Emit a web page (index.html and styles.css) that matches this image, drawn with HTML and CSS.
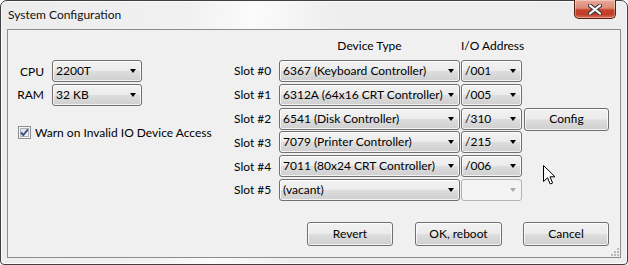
FILE: index.html
```html
<!DOCTYPE html>
<html>
<head>
<meta charset="utf-8">
<link rel="stylesheet" href="styles.css">
</head>
<body>
<div class="window">
  <div class="titlebar">
    <span class="title">System Configuration</span>
    <div class="close">
      <svg width="14" height="11" viewBox="0 0 14 11">
        <path d="M2 1.5 L12 9.5 M12 1.5 L2 9.5" stroke="#3a3a3a" stroke-width="4.2" stroke-linecap="round"/>
        <path d="M2 1.5 L12 9.5 M12 1.5 L2 9.5" stroke="#ffffff" stroke-width="2.2" stroke-linecap="round"/>
      </svg>
    </div>
  </div>
  <div class="client">
    <div class="main">
      <div class="left">
        <div class="field">
          <span class="lbl">CPU</span>
          <div class="combo cpu"><span class="val">2200T</span><i class="arrow"></i></div>
        </div>
        <div class="field">
          <span class="lbl">RAM</span>
          <div class="combo cpu"><span class="val">32 KB</span><i class="arrow"></i></div>
        </div>
        <label class="check">
          <svg class="box" width="13" height="13" viewBox="0 0 13 13">
            <defs>
              <linearGradient id="cb" x1="0" y1="0" x2="1" y2="1">
                <stop offset="0" stop-color="#dcdcdc"/>
                <stop offset="1" stop-color="#fbfbfb"/>
              </linearGradient>
            </defs>
            <rect x="0.5" y="0.5" width="12" height="12" fill="#f4f4f4" stroke="#8e8f8f"/>
            <rect x="2.5" y="2.5" width="8" height="8" fill="url(#cb)" stroke="#aeb2b6"/>
            <path d="M3 6.5 L5.3 9 L10 3.3" fill="none" stroke="#3d5088" stroke-width="1.9"/>
          </svg>
          <span>Warn on Invalid IO Device Access</span>
        </label>
      </div>
      <div class="slots">
        <span></span>
        <span class="head">Device Type</span>
        <span class="head">I/O Address</span>
        <span></span>

        <span class="slot">Slot #0</span>
        <div class="combo"><span class="val">6367 (Keyboard Controller)</span><i class="arrow"></i></div>
        <div class="combo"><span class="val">/001</span><i class="arrow"></i></div>
        <span></span>

        <span class="slot">Slot #1</span>
        <div class="combo"><span class="val">6312A (64x16 CRT Controller)</span><i class="arrow"></i></div>
        <div class="combo"><span class="val">/005</span><i class="arrow"></i></div>
        <span></span>

        <span class="slot">Slot #2</span>
        <div class="combo"><span class="val">6541 (Disk Controller)</span><i class="arrow"></i></div>
        <div class="combo"><span class="val">/310</span><i class="arrow"></i></div>
        <div class="btn config">Config</div>

        <span class="slot">Slot #3</span>
        <div class="combo"><span class="val">7079 (Printer Controller)</span><i class="arrow"></i></div>
        <div class="combo"><span class="val">/215</span><i class="arrow"></i></div>
        <span></span>

        <span class="slot">Slot #4</span>
        <div class="combo"><span class="val">7011 (80x24 CRT Controller)</span><i class="arrow"></i></div>
        <div class="combo"><span class="val">/006</span><i class="arrow"></i></div>
        <span></span>

        <span class="slot">Slot #5</span>
        <div class="combo"><span class="val">(vacant)</span><i class="arrow"></i></div>
        <div class="combo disabled"><span class="val"></span><i class="arrow"></i></div>
        <span></span>
      </div>
    </div>
    <div class="buttons">
      <div class="btn wide">Revert</div>
      <div class="btn wide ok">OK, reboot</div>
      <div class="btn wide">Cancel</div>
    </div>
    <svg class="grip" width="8" height="8" viewBox="0 0 8 8">
      <g fill="#b9b9b9">
        <rect x="6" y="0" width="2" height="2"/>
        <rect x="3" y="3" width="2" height="2"/><rect x="6" y="3" width="2" height="2"/>
        <rect x="0" y="6" width="2" height="2"/><rect x="3" y="6" width="2" height="2"/><rect x="6" y="6" width="2" height="2"/>
      </g>
    </svg>
  </div>
  <svg class="cursor" width="13" height="21" viewBox="0 0 13 21">
    <path d="M0.5 0.5 V16.5 L4.5 12.8 L7.2 19 L9.6 18 L7 11.8 H12 Z" fill="#ffffff" stroke="#000000" stroke-width="1" stroke-linejoin="miter"/>
  </svg>
</div>
</body>
</html>
```

FILE: styles.css
```css
* { box-sizing: border-box; }
html, body { margin: 0; padding: 0; }
body {
  width: 628px;
  height: 265px;
  overflow: hidden;
  background: #ffffff;
  font-family: Lato, "Liberation Sans", sans-serif;
  font-size: 12px;
  color: #000;
}
.window {
  position: relative;
  width: 628px;
  height: 265px;
  border: 1px solid #3f3f3f;
  border-radius: 7px 7px 4px 4px;
  background: linear-gradient(100deg, #ececec 0%, #f1f1f1 28%, #fbfbfb 38%, #eeeeee 50%, #ededed 100%);
  box-shadow: inset 0 0 0 1px #fbfbfb;
  display: flex;
  flex-direction: column;
}
.titlebar {
  height: 28px;
  display: flex;
  align-items: flex-start;
  padding-left: 7px;
}
.title {
  margin-top: 6px;
  line-height: 16px;
  color: #111;
}
.close {
  margin-left: auto;
  margin-right: 11px;
  width: 42px;
  height: 19px;
  margin-top: -1px;
  border: 1px solid #5b1c12;
  border-top: none;
  border-radius: 0 0 5px 5px;
  background: linear-gradient(#e9a797 0%, #dd8b78 45%, #c7432c 55%, #c23d27 80%, #d8705a 100%);
  box-shadow: inset 0 0 0 1px rgba(255,255,255,0.35);
  display: flex;
  align-items: center;
  justify-content: center;
}
.client {
  position: relative;
  flex: 1;
  margin: 0 6px 6px 6px;
  border: 1px solid #8a8d94;
  background: #f0f0f0;
  display: flex;
  flex-direction: column;
  padding: 0 11px 11px 6px;
}
.main {
  flex: 1;
  display: flex;
}
.left {
  width: 221px;
  padding-top: 30px;
  display: flex;
  flex-direction: column;
  gap: 1.8px;
}
.field {
  display: flex;
  align-items: center;
  height: 22px;
}
.lbl {
  width: 30px;
  text-align: right;
  margin-right: 8px;
}
.combo {
  position: relative;
  height: 22px;
  border: 1px solid #707070;
  border-radius: 3px;
  background: linear-gradient(#f3f3f3 0%, #ebebeb 48%, #dddddd 52%, #cfcfcf 100%);
  box-shadow: inset 0 0 0 1px rgba(255,255,255,0.75);
  display: flex;
  align-items: center;
  padding-left: 3px;
  white-space: nowrap;
  overflow: hidden;
}
.combo.cpu { width: 90px; }
.combo .val { line-height: 16px; }
.arrow {
  position: absolute;
  right: 5px;
  top: 8px;
  width: 0;
  height: 0;
  border-left: 3.5px solid transparent;
  border-right: 3.5px solid transparent;
  border-top: 4px solid #000;
}
.combo.disabled {
  border-color: #b3b3b3;
  background: #f4f4f4;
  box-shadow: none;
}
.combo.disabled .arrow {
  border-top-color: #a8a8a8;
}
.check {
  display: flex;
  align-items: center;
  margin-top: 17px;
  margin-left: 4px;
  gap: 4px;
}
.check .box { flex: none; }
.slots {
  display: grid;
  grid-template-columns: 44px 181px 61px 86px;
  grid-template-rows: 28.2px repeat(6, 22px);
  column-gap: 1px;
  row-gap: 1.8px;
  align-items: center;
}
.slots > :nth-child(4n) { margin-left: 1px; }
.head {
  align-self: end;
  text-align: center;
  white-space: nowrap;
  line-height: 16px;
  margin-bottom: 4px;
}
.slot { white-space: nowrap; }
.btn {
  height: 24px;
  border: 1px solid #707070;
  border-radius: 3px;
  background: linear-gradient(#f2f2f2 0%, #ebebeb 48%, #dddddd 52%, #cfcfcf 100%);
  box-shadow: inset 0 0 0 1px rgba(255,255,255,0.75);
  display: flex;
  align-items: center;
  justify-content: center;
  line-height: 16px;
}
.btn.config { height: 23px; margin-top: 1px; }
.buttons {
  display: flex;
  justify-content: flex-end;
  gap: 22px;
}
.btn.wide { width: 86px; }
.btn.ok { width: 87px; margin-right: -1px; }
.grip {
  position: absolute;
  right: 1px;
  bottom: 1px;
}
.cursor {
  position: absolute;
  left: 542px;
  top: 164px;
}
```
